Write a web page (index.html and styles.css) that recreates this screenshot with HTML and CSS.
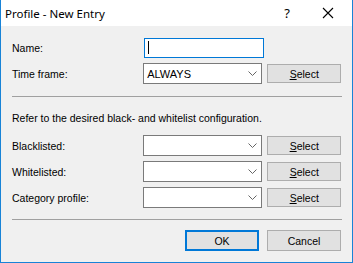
FILE: index.html
```html
<!DOCTYPE html>
<html lang="en">
<head>
  <meta charset="UTF-8">
  <title>Profile - New Entry</title>
  <link rel="stylesheet" href="styles.css">
</head>
<body>
  <div class="window">
    <div class="titlebar">
      <span class="title">Profile - New Entry</span>
      <span class="help">?</span>
      <span class="close">
        <svg width="12" height="12" viewBox="0 0 12 12"><path d="M1 1L11 11M11 1L1 11" stroke="#000" stroke-width="1.1" fill="none"/></svg>
      </span>
    </div>

    <div class="content">
      <div class="row">
        <label>Name:</label>
        <div class="textbox"><span class="caret"></span></div>
      </div>
      <div class="row">
        <label>Time frame:</label>
        <div class="combo"><span>ALWAYS</span><svg class="chev" width="9" height="5" viewBox="0 0 9 5"><path d="M0.5 0.5L4.5 4.5L8.5 0.5" stroke="#666" fill="none"/></svg></div>
        <button class="btn"><u>S</u>elect</button>
      </div>

      <div class="sep first"></div>

      <p class="note">Refer to the desired black- and whitelist configuration.</p>

      <div class="row">
        <label>Blacklisted:</label>
        <div class="combo"><span></span><svg class="chev" width="9" height="5" viewBox="0 0 9 5"><path d="M0.5 0.5L4.5 4.5L8.5 0.5" stroke="#666" fill="none"/></svg></div>
        <button class="btn"><u>S</u>elect</button>
      </div>
      <div class="row">
        <label>Whitelisted:</label>
        <div class="combo"><span></span><svg class="chev" width="9" height="5" viewBox="0 0 9 5"><path d="M0.5 0.5L4.5 4.5L8.5 0.5" stroke="#666" fill="none"/></svg></div>
        <button class="btn"><u>S</u>elect</button>
      </div>
      <div class="row">
        <label>Category profile:</label>
        <div class="combo"><span></span><svg class="chev" width="9" height="5" viewBox="0 0 9 5"><path d="M0.5 0.5L4.5 4.5L8.5 0.5" stroke="#666" fill="none"/></svg></div>
        <button class="btn"><u>S</u>elect</button>
      </div>

      <div class="sep last"></div>

      <div class="actions">
        <button class="btn ok">OK</button>
        <button class="btn">Cancel</button>
      </div>
    </div>
  </div>
</body>
</html>
```

FILE: styles.css
```css
html, body {
  margin: 0;
  padding: 0;
  background-color: #f0f0f0;
  font-family: "Liberation Sans", Arial, sans-serif;
  font-size: 10.5px;
  color: #000;
}
.window {
  width: 353px;
  height: 263px;
  box-sizing: border-box;
  border: 1px solid #1883d7;
  border-top: none;
  background-color: #f0f0f0;
}
.titlebar {
  height: 26px;
  background-color: #fff;
  display: flex;
  align-items: center;
  font-family: "Noto Sans", sans-serif;
  font-size: 11.5px;
}
.title {
  margin-left: 4px;
  flex: 1;
}
.help {
  width: 20px;
  margin-right: 25px;
  text-align: center;
  font-size: 13px;
}
.close {
  width: 12px;
  height: 12px;
  margin-right: 18px;
  display: flex;
}
.content {
  padding: 11px 11px 0 11px;
}
.row {
  display: flex;
  align-items: center;
  height: 21px;
  margin-bottom: 5px;
}
.row label {
  width: 132px;
}
.textbox {
  width: 120px;
  height: 20px;
  box-sizing: border-box;
  border: 1px solid #0078d7;
  background: #fff;
  display: flex;
  align-items: center;
  padding-left: 3px;
}
.caret {
  width: 1px;
  height: 13px;
  background: #000;
}
.combo {
  width: 120px;
  height: 21px;
  box-sizing: border-box;
  border: 1px solid #7a7a7a;
  background: #fff;
  display: flex;
  align-items: center;
  padding: 0 4px 0 3px;
}
.combo span {
  flex: 1;
  font-size: 11px;
}
.btn {
  width: 74px;
  height: 19px;
  margin-left: 5px;
  box-sizing: border-box;
  border: 1px solid #adadad;
  background: #e1e1e1;
  font-family: "Liberation Sans", Arial, sans-serif;
  font-size: 10.5px;
  color: #000;
  padding: 0;
}
.sep {
  height: 1px;
  background: #a0a0a0;
  width: 330px;
}
.sep.first {
  margin-top: 12px;
}
.note {
  margin: 0;
  line-height: 14px;
  padding: 14px 0 10px;
}
.sep.last {
  margin-top: 11px;
}
.actions {
  display: flex;
  justify-content: flex-end;
  margin-top: 10px;
}
.actions .btn {
  height: 21px;
  margin-left: 8px;
}
.actions .btn.ok {
  border: 2px solid #0078d7;
}
```
